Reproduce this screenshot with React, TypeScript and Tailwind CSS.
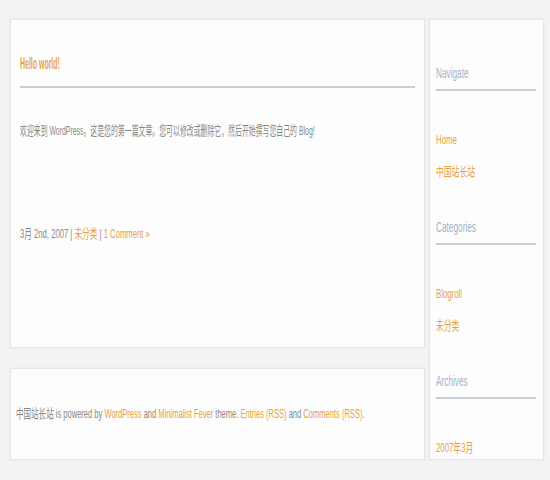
import React from 'react'

const font = { fontFamily: '"Liberation Sans", "Noto Sans CJK SC", sans-serif' }

function Sq({ children, className = 'scale-x-[0.6]' }: { children: React.ReactNode; className?: string }) {
  return <span className={`inline-block origin-left whitespace-nowrap ${className}`}>{children}</span>
}

function Link({ children }: { children: React.ReactNode }) {
  return <a className="text-[#e6a23e]">{children}</a>
}

function Widget({ title, items, first }: { title: string; items: string[]; first?: boolean }) {
  return (
    <div className={first ? 'mt-[43px]' : 'mt-[37px]'}>
      <h3 className="border-b-2 border-[#c9ced6] pb-[6px] text-[14px] leading-[20px] text-[#a6b2c7]">
        <Sq className="scale-x-[0.59]">{title}</Sq>
      </h3>
      <ul className="mt-[41px] flex flex-col gap-[16px]">
        {items.map((item) => (
          <li key={item} className="text-[13px] leading-[16px]">
            <Sq>
              <Link>{item}</Link>
            </Sq>
          </li>
        ))}
      </ul>
    </div>
  )
}

export default function App() {
  return (
    <div
      className="flex h-[480px] w-[550px] gap-[4px] overflow-hidden bg-[#f3f3f3] pl-[10px] pt-[19px] text-[#888888]"
      style={font}
    >
      <div className="flex w-[415px] flex-col gap-[20px]">
        <div className="h-[329px] overflow-hidden border border-[#e6e6e6] bg-[#fdfdfd] px-[9px] pt-[34px] shadow-[0_0_0_1px_#eeeeee]">
          <h2 className="border-b-2 border-[#c9cdd4] pb-[12px] text-[17px] font-bold leading-[20px] text-[#e8a546]">
            <Sq className="scale-x-[0.41]">Hello world!</Sq>
          </h2>
          <p className="mt-[35px] text-[13px] leading-[16px]">
            <Sq className="scale-x-[0.53]">欢迎来到 WordPress。这是您的第一篇文章。您可以修改或删除它，然后开始撰写您自己的 Blog!</Sq>
          </p>
          <p className="mt-[87px] text-[13px] leading-[16px]">
            <Sq className="scale-x-[0.59]">
              3月 2nd, 2007 | <Link>未分类</Link> | <Link>1 Comment »</Link>
            </Sq>
          </p>
        </div>
        <div className="flex h-[92px] items-center overflow-hidden border border-[#e6e6e6] bg-[#fdfdfd] pl-[5px] text-[13px] leading-[16px] shadow-[0_0_0_1px_#eeeeee]">
          <Sq className="scale-x-[0.58]">
            中国站长站 is powered by <Link>WordPress</Link> and <Link>Minimalist Fever</Link> theme.{' '}
            <Link>Entries (RSS)</Link> and <Link>Comments (RSS)</Link>.
          </Sq>
        </div>
      </div>
      <div className="h-[441px] w-[115px] overflow-hidden border border-[#e6e6e6] bg-[#fdfdfd] pl-[6px] pr-[7px] shadow-[0_0_0_1px_#eeeeee]">
        <Widget first title="Navigate" items={['Home', '中国站长站']} />
        <Widget title="Categories" items={['Blogroll', '未分类']} />
        <Widget title="Archives" items={['2007年3月']} />
      </div>
    </div>
  )
}
